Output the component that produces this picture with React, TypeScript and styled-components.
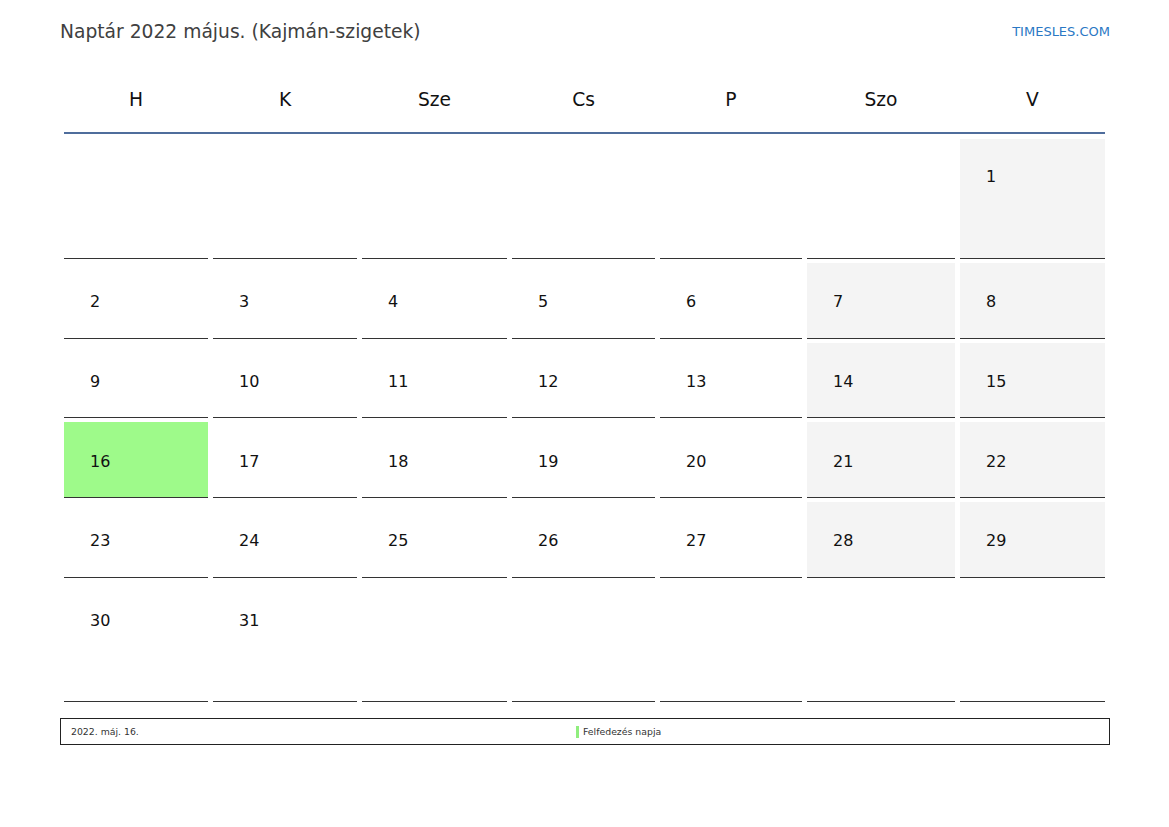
import React from "react";
import styled, { createGlobalStyle } from "styled-components";

const GlobalStyle = createGlobalStyle`
  html, body { margin: 0; padding: 0; background: #ffffff; }
  body { font-family: "DejaVu Sans", "Liberation Sans", sans-serif; }
`;

const Page = styled.div`
  width: 1169px;
  height: 827px;
  box-sizing: border-box;
  padding: 21px 59px 0 60px;
  display: flex;
  flex-direction: column;
`;

const TopBar = styled.header`
  display: flex;
  justify-content: space-between;
  align-items: center;
  height: 22px;
`;

const Title = styled.h1`
  margin: 0;
  font-size: 18.7px;
  font-weight: normal;
  line-height: 22px;
  color: #404040;
`;

const Brand = styled.span`
  font-size: 13px;
  color: #2a78c4;
  line-height: 22px;
`;

const Calendar = styled.div`
  margin: 23px 5px 0 4px;
  display: flex;
  flex-direction: column;
`;

const cols = "144px 144px 145px 143px 142px 148px 145px";

const HeadRow = styled.div`
  display: grid;
  grid-template-columns: ${cols};
  column-gap: 5px;
  height: 66px;
  border-bottom: 2px solid #4f6d9c;
`;

const HeadCell = styled.div`
  display: flex;
  align-items: center;
  justify-content: center;
  font-size: 18.67px;
  color: #111;
`;

const Body = styled.div`
  display: grid;
  grid-template-columns: ${cols};
  grid-template-rows: 120px 76px 75px 76px 76px 120px;
  column-gap: 5px;
  row-gap: 4px;
  margin-top: 5px;
`;

const Cell = styled.div<{ $tone: "plain" | "weekend" | "holiday"; $pad: number }>`
  box-sizing: border-box;
  border-bottom: 1px solid #333333;
  padding: ${(p) => p.$pad}px 0 0 26px;
  font-size: 16px;
  line-height: 18px;
  color: #111;
  background: ${(p) =>
    p.$tone === "holiday" ? "#9efa8a" : p.$tone === "weekend" ? "#f4f4f4" : "#ffffff"};
`;

const Footer = styled.div`
  margin-top: 16px;
  height: 27px;
  box-sizing: border-box;
  border: 1px solid #222;
  display: grid;
  grid-template-columns: 505px 1fr;
  align-items: center;
  padding: 0 10px;
  font-size: 9.33px;
  color: #333;
`;

const Legend = styled.div`
  display: flex;
  align-items: center;
  gap: 4px;
`;

const Swatch = styled.span`
  display: inline-block;
  width: 3px;
  height: 12px;
  background: #90ee7e;
`;

const heads = ["H", "K", "Sze", "Cs", "P", "Szo", "V"];

type Day = { n: number | null; holiday?: boolean };

const days: Day[] = [];
for (let i = 0; i < 6; i++) days.push({ n: null });
for (let d = 1; d <= 31; d++) days.push({ n: d, holiday: d === 16 });
while (days.length < 42) days.push({ n: null });

const rowPad = [29, 30, 30, 31, 30, 30];

export default function App() {
  return (
    <>
      <GlobalStyle />
      <Page>
        <TopBar>
          <Title>Naptár 2022 május. (Kajmán-szigetek)</Title>
          <Brand>TIMESLES.COM</Brand>
        </TopBar>
        <Calendar>
          <HeadRow>
            {heads.map((h) => (
              <HeadCell key={h}>{h}</HeadCell>
            ))}
          </HeadRow>
          <Body>
            {days.map((d, i) => {
              const col = i % 7;
              const tone = d.holiday
                ? "holiday"
                : d.n !== null && col >= 5
                ? "weekend"
                : "plain";
              return (
                <Cell key={i} $tone={tone} $pad={rowPad[Math.floor(i / 7)]}>
                  {d.n ?? ""}
                </Cell>
              );
            })}
          </Body>
        </Calendar>
        <Footer>
          <span>2022. máj. 16.</span>
          <Legend>
            <Swatch />
            <span>Felfedezés napja</span>
          </Legend>
        </Footer>
      </Page>
    </>
  );
}
